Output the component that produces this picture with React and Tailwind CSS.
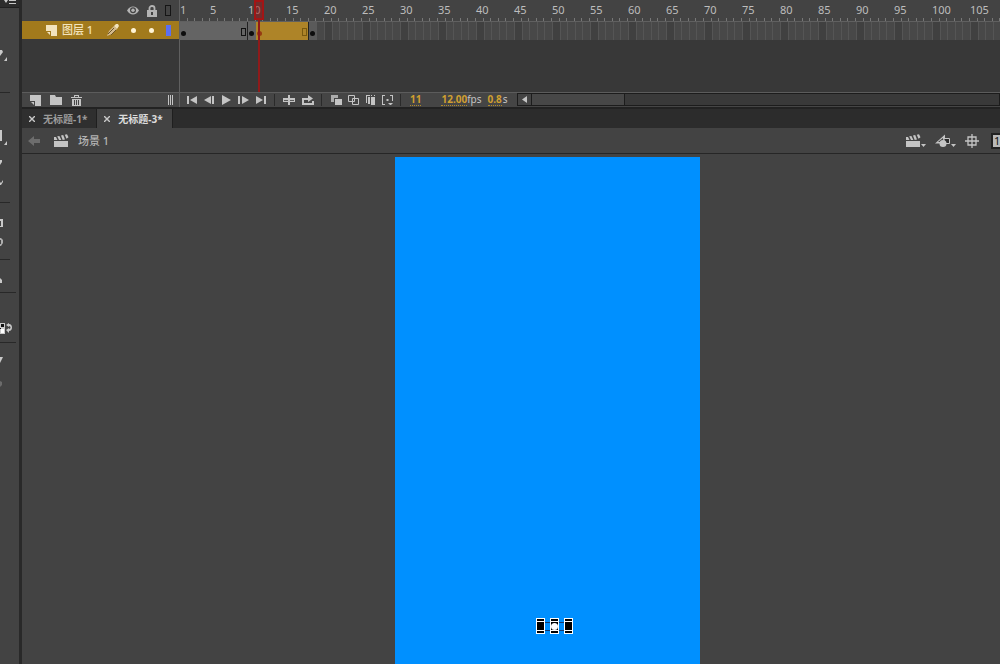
import React, { useState } from "react";

const FONT = "font-['Noto_Sans','Noto_Sans_CJK_SC',sans-serif]";

const Icon = ({ w, h, children, className = "" }) => (
  <svg width={w} height={h} viewBox={`0 0 ${w} ${h}`} fill="currentColor" aria-hidden="true" className={`shrink-0 ${className}`}>
    {children}
  </svg>
);

const NewLayerIcon = ({ className }) => (
  <Icon w={11} h={11} className={className}>
    <path d="M0 0h11v11H5V6H0z" />
    <path d="M1 7h3v3z" />
  </Icon>
);

const ClapperIcon = () => (
  <Icon w={15} h={13}>
    <path d="M0 7h14v6H0z" />
    <path d="M0 3h2l1.500 3H0zM3.200 2.300l2.200-.4L7.400 6H5zM7 1.500l2.200-.4L11 5.500l-2.300.5zM10.800.8l2.200-.5 1.500 3-2 1.500z" />
  </Icon>
);

// left tool strip, most of it scrolled out of the window
const toolSections = [
  {
    style: "w-[10px] h-[85px]",
    tools: [{ name: "Lasso", box: "mt-[36px] h-[18px]", art: <><path d="M0 6h2l1 2-3 4z" /><path d="M7 13v4H4z" /></> }],
  },
  {
    style: "w-[10px] h-[110px]",
    tools: [
      { name: "Rectangle", box: "mt-[35px] h-[20px]", art: <><path d="M0 1h2v11H0z" /><path d="M7 12v4H4z" /></> },
      { name: "Pencil", box: "h-[22px]", art: <path d="M0 10h2v2l-2 3z" /> },
      { name: "Brush", box: "h-[22px]", art: <path d="M0 10l1 1 2-3v2l-2 3H0z" /> },
    ],
  },
  {
    style: "w-[10px] h-[57px]",
    tools: [
      { name: "Bone", box: "mt-[12px] h-[18px]", art: <path d="M0 4h3v8H0v-1h1V6H0z" /> },
      { name: "Paint bucket", box: "h-[18px]", art: <path d="M0 5h1l2 2v3l-2 3H0v-2h1V7H0z" opacity=".8" /> },
    ],
  },
  {
    style: "w-[16px] h-[33px]",
    tools: [{ name: "Eraser", box: "mt-[11px] h-[18px]", art: <path d="M0 7l2 2v3H0z" /> }],
  },
  {
    style: "w-[16px] h-[50px]",
    tools: [
      {
        name: "Swap colors",
        box: "mt-[26px] h-[18px]",
        art: (
          <>
            <path d="M0 4h5v11H0z" />
            <path d="M1 5h3v3H1zM0 9h1v1H0z" fill="#111" />
            <path d="M1 10h3v4H1z" fill="#fff" />
            <path d="M6 6l3-2v1c4 0 4 7 0 7v2l-3-3 3-2v1c2 0 2-3 0-3v1z" />
          </>
        ),
      },
    ],
  },
  {
    style: "w-[16px] h-[60px] border-b-0",
    tools: [
      { name: "Snap", box: "mt-[8px] h-[18px]", art: <path d="M0 6h3l-3 6z" /> },
      { name: "Smooth", box: "mt-[7px] h-[18px]", art: <path d="M0 5l2 1v3l-2 2z" opacity=".3" /> },
    ],
  },
];

function ToolStrip() {
  return (
    <aside className="flex w-[22px] shrink-0 flex-col border-r-[3px] border-[#292929] bg-[#434343] text-[#c9c9c9]">
      <div className="flex h-2 shrink-0 items-start justify-end border-b border-[#202020] bg-[#2c2c2c] pr-[3px]">
        <Icon w={12} h={5}>
          <path d="M0 0h4L2 3zM5 0h7v1H5zM5 3h7v1H5z" />
        </Icon>
      </div>
      {toolSections.map((section, i) => (
        <div key={i} className={`flex shrink-0 flex-col border-b border-[#282828] ${section.style}`}>
          {section.tools.map((tool) => (
            <button key={tool.name} aria-label={tool.name} className={`block w-[14px] shrink-0 ${tool.box}`}>
              <Icon w={14} h={18}>{tool.art}</Icon>
            </button>
          ))}
        </div>
      ))}
    </aside>
  );
}

function LayerPanel() {
  return (
    <div className="flex w-[158px] shrink-0 flex-col border-r border-[#606060]">
      <div className="flex h-[21px] items-center justify-end bg-[#434343] pr-2 text-[#b4b4b4]">
        <button aria-label="Show or hide all layers" className="mr-2">
          <Icon w={12} h={9}>
            <path d="M0 4.500C3-.7 9-.7 12 4.500 9 9.700 3 9.700 0 4.500z" />
            <circle cx="6" cy="4.300" r="3" fill="#434343" />
            <circle cx="6" cy="4.300" r="1.700" />
          </Icon>
        </button>
        <button aria-label="Lock all layers" className="mr-2">
          <Icon w={10} h={12}>
            <path d="M0 5h10v7H0z" />
            <path d="M2.500 5V3a2.500 2 0 015 0v2" fill="none" stroke="currentColor" strokeWidth="1.800" />
            <path d="M4 7h2v3H4z" fill="#434343" />
          </Icon>
        </button>
        <button aria-label="Outline all layers" className="h-[11px] w-[6px] border border-[#151515]" />
      </div>
      <div className="flex h-[18px] items-center bg-[#a27a1c] pr-2 pl-6 text-[#f2e3bd]">
        <NewLayerIcon className="mr-[5px]" />
        <span className="flex-1 text-[11px] leading-4 font-medium whitespace-nowrap">图层 1</span>
        <Icon w={12} h={12} className="mr-3">
          <path d="M0 12l2-5 5-5 3 3-5 5z" fill="#d4b98b" />
          <path d="M1 10l6-6M4 11l5-5" stroke="#6d5727" />
          <path d="M7 2l2-2h2l1 2-2 3z" />
        </Icon>
        <span className="mr-[13px] size-[5px] rounded-full bg-[#fff4d5]" />
        <span className="mr-3 size-[5px] rounded-full bg-[#fff4d5]" />
        <span className="h-[11px] w-[5px] bg-[#5b6ff0]" />
      </div>
    </div>
  );
}

const labels = Array.from({ length: 21 }, (_, i) => (i + 1) * 5);
const emptyGroups = Array.from({ length: 40 }, (_, i) => i);

function Timeline() {
  return (
    <div className="relative min-w-0 flex-1 overflow-hidden">
      <div className="flex h-[22px] border-b border-[#606060] bg-[#434343] text-[11px] leading-5 text-[#bdbdbd]">
        {[1, ...labels].map((n) => (
          <div key={n} className={`flex shrink-0 flex-col justify-between ${n === 1 ? "w-[30px]" : "w-[38px]"}`}>
            <span className="h-[18px]">{n}</span>
            <span className={`grid h-[3px] ${n === 1 ? "grid-cols-4" : "grid-cols-5"}`}>
              {Array.from({ length: n === 1 ? 4 : 5 }, (_, i) => (
                <i key={i} className="border-r border-[#777]" />
              ))}
            </span>
          </div>
        ))}
      </div>
      <div className="flex h-[18px]">
        <div className="flex w-[68px] shrink-0 items-end justify-between border-r border-[#222] bg-[#646464] px-[1px] pb-1">
          <span className="size-[5px] rounded-full bg-[#0d0d0d]" />
          <span className="h-2 w-[5px] border border-[#111]" />
        </div>
        <div className="flex w-2 shrink-0 items-end bg-[#646464] px-[1px] pb-1">
          <span className="size-[5px] rounded-full bg-[#0d0d0d]" />
        </div>
        <div className="flex w-[53px] shrink-0 items-end justify-between border-r border-[#222] bg-[#ae8428] px-[1px] pb-1">
          <span className="size-[5px] rounded-full bg-[#963b12]" />
          <span className="h-2 w-[5px] border border-[#79590f]" />
        </div>
        <div className="flex w-2 shrink-0 items-end bg-[#5a5a5a] px-[1px] pb-1">
          <span className="size-[5px] rounded-full bg-[#0d0d0d]" />
        </div>
        <div className="flex min-w-0 flex-1 overflow-hidden bg-[#484848] pl-[7px]">
          {emptyGroups.map((n) => (
            <div key={n} className="grid w-[38px] shrink-0 grid-cols-5">
              {[0, 1, 2, 3, 4].map((i) => (
                <i key={i} className={`border-l border-[#555] ${i === 0 ? "bg-[#404040]" : ""}`} />
              ))}
            </div>
          ))}
        </div>
      </div>
      {/* playhead */}
      <div className="absolute top-0 left-[74px] flex h-full w-[10px] flex-col items-center">
        <span className="h-5 w-full border-2 border-[#a31515] bg-[#a31515]/50" />
        <span className="w-[2px] flex-1 bg-[#8f1a1a]" />
      </div>
    </div>
  );
}

const playback = [
  { name: "First frame", art: <path d="M1 1h2v8H1zM11 1v8L4 5z" /> },
  { name: "Step back", art: <path d="M8 1v8L1 5zM9 1h2v8H9z" /> },
  { name: "Play", art: <path d="M2 0l9 5-9 5z" /> },
  { name: "Step forward", art: <path d="M1 1h2v8H1zM5 1l7 4-7 4z" /> },
  { name: "Last frame", art: <path d="M2 1l7 4-7 4zM10 1h2v8h-2z" /> },
];

const looping = [
  { name: "Center frame", art: <><path d="M0 3h12v4H0z" /><path d="M5 0h2v10H5z" /><path d="M1 5h4v1H1zM7 5h4v1H7z" fill="#5a5a5a" /></> },
  { name: "Loop", art: <path d="M0 3h6V0l5 3.500L6 7V5H2v3h8V6h2v4H0z" /> },
];

const onion = [
  { name: "Onion skin", art: <><path d="M0 0h7v3H3v4H0z" opacity=".8" /><path d="M4 4h7v6H4z" /></> },
  { name: "Onion skin outlines", art: <path d="M.5.5h6v6h-6zM4.500 3.500h6v6h-6z" fill="none" stroke="currentColor" /> },
  { name: "Edit multiple frames", art: <><path d="M1 0h4v1H2v7H1z" /><path d="M3 2h2v7H3zM6 2h4v8H6z" /><path d="M6 0h1v1H6zM9 0h1v1H9z" /></> },
  { name: "Modify markers", art: <path d="M0 0h3v1H1v8h2v1H0zM8 0h3v6h-1V1H8zM4.500 4h2v2h-2zM6 8h5L8.500 10.500z" /> },
];

const BarButton = ({ item, width }) => (
  <button aria-label={item.name} className={`flex h-[14px] items-center justify-center ${width}`}>
    <Icon w={12} h={10}>{item.art}</Icon>
  </button>
);

const Divider = ({ className }) => <span className={`h-3 w-px bg-[#2a2a2a] ${className}`} />;

const HotText = ({ label, children }) => (
  <button aria-label={label} className="border-b border-dotted border-[#b08a2a] font-bold text-[#cf9f30]">
    {children}
  </button>
);

function TimelineBar() {
  return (
    <div className="flex h-[15px] shrink-0 border-t border-[#5c5c5c] bg-[#454545] text-[#c4c4c4]">
      <div className="flex w-[158px] shrink-0 items-center border-r border-[#606060] pr-[6px] pl-2">
        <button aria-label="New layer" className="mr-[9px]"><NewLayerIcon /></button>
        <button aria-label="New folder" className="mr-[9px]">
          <Icon w={12} h={10}><path d="M0 0h5l1 2h6v8H0z" /></Icon>
        </button>
        <button aria-label="Delete">
          <Icon w={11} h={11}>
            <path d="M0 2h3V0h5v2h3v1H0zM4 1v1h3V1zM1 4h9v7H1zM3 5v5h1V5zM5 5v5h1V5zM7 5v5h1V5z" fillRule="evenodd" />
          </Icon>
        </button>
        <Icon w={5} h={10} className="ml-auto"><path d="M0 0h1v10H0zM2 0h1v10H2zM4 0h1v10H4z" /></Icon>
      </div>
      <div className="flex w-[337px] shrink-0 items-center pl-[3px]">
        {playback.map((item) => <BarButton key={item.name} item={item} width="w-[17px]" />)}
        <Divider className="mr-1 ml-[6px]" />
        {looping.map((item) => <BarButton key={item.name} item={item} width="w-[19px]" />)}
        <Divider className="mr-[6px] ml-1" />
        {onion.map((item) => <BarButton key={item.name} item={item} width="w-[17px]" />)}
        <Divider className="mr-[9px] ml-1" />
        <div className="flex text-[10px] leading-[11px]">
          <HotText label="Current frame">11</HotText>
          <span className="ml-5 flex"><HotText label="Frame rate">12.00</HotText>fps</span>
          <span className="ml-[6px] flex gap-px"><HotText label="Elapsed time">0.8</HotText>s</span>
        </div>
      </div>
      <div className="flex h-[13px] min-w-0 flex-1 border border-[#1c1c1c] bg-[#393939]">
        <button aria-label="Scroll left" className="flex w-[14px] items-center justify-center border-r border-[#1c1c1c] bg-[#444]">
          <Icon w={6} h={7}><path d="M5 0v7L0 3.500z" /></Icon>
        </button>
        <div className="w-[93px] border-r border-[#1c1c1c] bg-[#474747]" />
      </div>
    </div>
  );
}

function DocumentTabs() {
  const [active, setActive] = useState("无标题-3*");
  return (
    <div className="flex h-[21px] shrink-0 border-t-2 border-[#222] bg-[#2c2c2c] text-[10px] leading-[18px] font-bold">
      {["无标题-1*", "无标题-3*"].map((name) => (
        <div
          key={name}
          className={`flex items-center border-r border-[#1f1f1f] pr-[9px] pl-[7px] ${name === active ? "bg-[#434343] text-[#dcdcdc]" : "bg-[#2f2f2f] text-[#9b9b9b]"}`}
        >
          <button aria-label={`Close ${name}`} className="mr-2">
            <Icon w={6} h={6}><path d="M0 0l6 6M6 0L0 6" stroke="#c8c8c8" strokeWidth="1.400" /></Icon>
          </button>
          <button onClick={() => setActive(name)} className="whitespace-nowrap">{name}</button>
        </div>
      ))}
    </div>
  );
}

const MenuCaret = () => <Icon w={5} h={3} className="mt-[10px]"><path d="M0 0h5L2.500 3z" /></Icon>;

function SceneBar() {
  return (
    <div className="flex h-[26px] shrink-0 items-center overflow-hidden border-b border-[#262626] bg-[#434343] pl-[6px] text-[#c4c4c4]">
      <button aria-label="Back" className="mr-[14px] text-[#6d6d6d]">
        <Icon w={12} h={10}><path d="M0 5l6-5v3h6v4H6v3z" /></Icon>
      </button>
      <ClapperIcon />
      <span className="ml-[9px] pt-px text-[11px] leading-4 font-medium text-[#b5b5b5]">场景 1</span>
      <button aria-label="Edit scene" className="ml-auto flex items-center"><ClapperIcon /><MenuCaret /></button>
      <button aria-label="Edit symbols" className="ml-[9px] flex items-center">
        <Icon w={16} h={13}>
          <path d="M0 9.500L10 .5V4L5 9.500z" />
          <path d="M3 8l5-4v4z" fill="#434343" />
          <path d="M9 4.500h5.500v5H9z" fill="#2b2b2b" stroke="currentColor" />
          <circle cx="8" cy="9.500" r="3.500" />
        </Icon>
        <MenuCaret />
      </button>
      <button aria-label="Center stage" className="ml-[9px]">
        <Icon w={14} h={14}>
          <path d="M7 0v14M0 7h14M3 3h8v8H3z" fill="none" stroke="currentColor" strokeWidth="1.300" />
        </Icon>
      </button>
      <label className="ml-3 w-[9px] overflow-hidden">
        <input
          aria-label="Zoom"
          defaultValue="100%"
          className="block h-4 w-[52px] border-2 border-[#222] bg-[#b9b9b9] px-[1px] text-[11px] leading-3 text-[#111]"
        />
      </label>
    </div>
  );
}

const Handle = () => (
  <span className="flex w-[9px] flex-col border border-white bg-black py-[2px]">
    <i className="block h-[10px] border-y border-white" />
  </span>
);

function Stage() {
  return (
    <main className="flex min-h-0 flex-1 bg-[#434343] pt-[3px] pl-[373px]">
      <div className="relative w-[305px] bg-[#0090ff]">
        {/* selected shape on the canvas */}
        <div className="absolute top-[461px] left-[141px] flex h-4 w-[37px] justify-between">
          <span className="absolute inset-x-2 top-1 h-[9px] border-y border-[#123a70]" />
          <span className="relative flex"><Handle /></span>
          <span className="relative flex">
            <Handle />
            <i className="absolute top-[5px] left-[1px] size-[7px] rounded-full bg-white" />
          </span>
          <span className="relative flex"><Handle /></span>
        </div>
      </div>
    </main>
  );
}

export default function App() {
  return (
    <div className={`flex h-screen overflow-hidden bg-[#434343] ${FONT}`}>
      <ToolStrip />
      <div className="flex min-w-0 flex-1 flex-col">
        <section className="flex h-[92px] shrink-0 bg-[#383838]">
          <LayerPanel />
          <Timeline />
        </section>
        <TimelineBar />
        <DocumentTabs />
        <SceneBar />
        <Stage />
      </div>
    </div>
  );
}
